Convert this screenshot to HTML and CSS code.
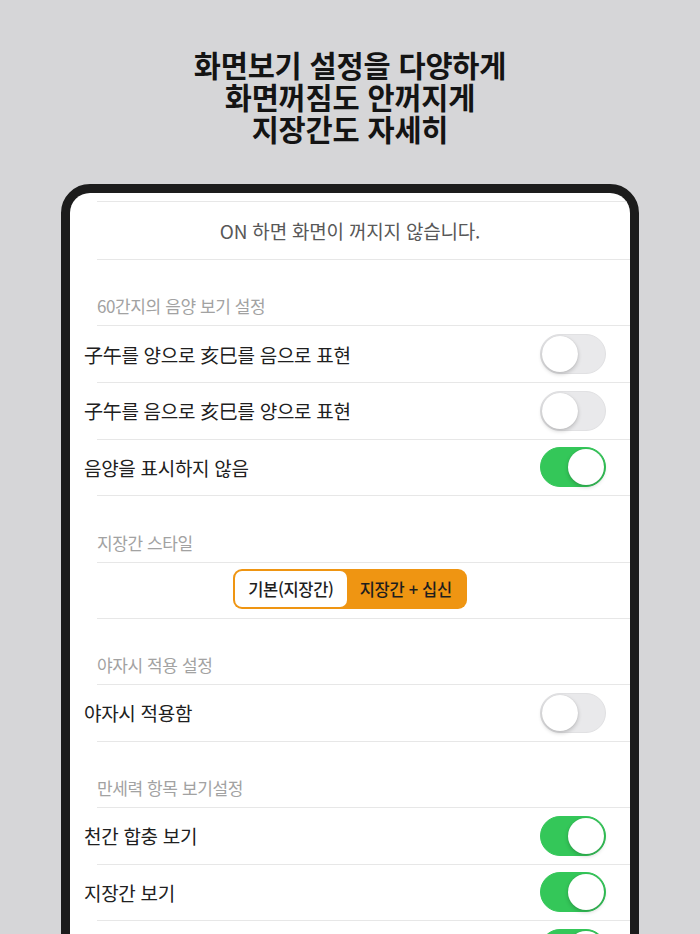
FILE: index.html
```html
<!DOCTYPE html>
<html lang="ko">
<head>
<meta charset="utf-8">
<link rel="stylesheet" href="styles.css">
</head>
<body>
<div class="page">
  <h1 class="title"><span class="tline">화면보기 설정을 다양하게</span><span class="tline">화면꺼짐도 안꺼지게</span><span class="tline">지장간도 자세히</span></h1>
  <div class="device">
    <div class="screen">
      <div class="cut sep"></div>
      <div class="note sep">ON 하면 화면이 꺼지지 않습니다.</div>

      <div class="group sep">60간지의 음양 보기 설정</div>
      <div class="row sep"><span class="label">子午를 양으로 亥巳를 음으로 표현</span><span class="toggle"></span></div>
      <div class="row sep"><span class="label">子午를 음으로 亥巳를 양으로 표현</span><span class="toggle"></span></div>
      <div class="row sep"><span class="label">음양을 표시하지 않음</span><span class="toggle on"></span></div>

      <div class="group sep">지장간 스타일</div>
      <div class="segrow sep">
        <div class="segment">
          <span class="seg selected">기본(지장간)</span>
          <span class="seg">지장간 + 십신</span>
        </div>
      </div>

      <div class="group sep">야자시 적용 설정</div>
      <div class="row sep"><span class="label">야자시 적용함</span><span class="toggle"></span></div>

      <div class="group sep">만세력 항목 보기설정</div>
      <div class="row sep"><span class="label">천간 합충 보기</span><span class="toggle on"></span></div>
      <div class="row sep"><span class="label">지장간 보기</span><span class="toggle on"></span></div>
      <div class="row"><span class="label"></span><span class="toggle on"></span></div>
    </div>
  </div>
</div>
</body>
</html>
```

FILE: styles.css
```css
html, body {
  margin: 0;
  padding: 0;
}
body {
  background: #d6d6d8;
  font-family: "Noto Sans CJK KR", "Noto Sans", sans-serif;
  height: 934px;
  overflow: hidden;
}
.page {
  display: flex;
  flex-direction: column;
  align-items: center;
}
.title {
  margin: 48px 0 0;
  display: flex;
  flex-direction: column;
  align-items: center;
  font-size: 29.5px;
  font-weight: 700;
  color: #141414;
  letter-spacing: -0.2px;
}
.tline {
  display: block;
  height: 32px;
  line-height: 32px;
  white-space: nowrap;
}
.device {
  margin-top: 40px;
  width: 578px;
  height: 780px;
  box-sizing: border-box;
  border: 9px solid #1c1c1c;
  border-radius: 29px;
  background: #1c1c1c;
}
.screen {
  background: #fff;
  border-radius: 20px;
  height: 100%;
  overflow: hidden;
  display: flex;
  flex-direction: column;
}
.sep {
  background-image: linear-gradient(#e7e7e7, #e7e7e7);
  background-repeat: no-repeat;
  background-position: 27px 100%;
  background-size: calc(100% - 27px) 1px;
}
.cut {
  height: 9px;
  flex: none;
}
.note {
  height: 58px;
  flex: none;
  display: flex;
  align-items: center;
  justify-content: center;
  font-size: 19px;
  color: #585858;
  letter-spacing: -0.2px;
  padding-bottom: 2px;
  box-sizing: border-box;
}
.group {
  height: 66.4px;
  flex: none;
  box-sizing: border-box;
  padding: 0 0 9px 27px;
  display: flex;
  align-items: flex-end;
  font-size: 17px;
  line-height: 22px;
  color: #a2a2a2;
  letter-spacing: -0.4px;
}
.row {
  height: 56.6px;
  flex: none;
  box-sizing: border-box;
  padding: 0 24px 1px 14px;
  display: flex;
  align-items: center;
  justify-content: space-between;
}
.label {
  font-size: 19px;
  color: #202020;
  letter-spacing: -0.3px;
}
.toggle {
  width: 66px;
  height: 40px;
  box-sizing: border-box;
  border-radius: 20px;
  background: #e9e9eb;
  border: 1px solid #e1e1e3;
  display: flex;
  align-items: center;
  padding: 1px;
  flex: none;
}
.toggle::before {
  content: "";
  width: 36px;
  height: 36px;
  border-radius: 50%;
  background: #fff;
  box-shadow: 0 2px 4px rgba(0, 0, 0, 0.2), 0 0 1px rgba(0, 0, 0, 0.15);
}
.toggle.on {
  background: #34c759;
  border-color: #34c759;
  justify-content: flex-end;
}
.segrow {
  height: 56px;
  flex: none;
  display: flex;
  align-items: center;
  justify-content: center;
  padding-bottom: 4px;
  box-sizing: border-box;
}
.segment {
  display: flex;
  height: 40px;
  box-sizing: border-box;
  background: #ef9512;
  border-radius: 9px;
  padding: 2px;
}
.seg {
  display: flex;
  align-items: center;
  padding: 0 13px;
  font-size: 16.5px;
  font-weight: 500;
  color: #1e1e1e;
  letter-spacing: -0.3px;
  border-radius: 7px;
}
.seg.selected {
  background: #fff;
}
```
